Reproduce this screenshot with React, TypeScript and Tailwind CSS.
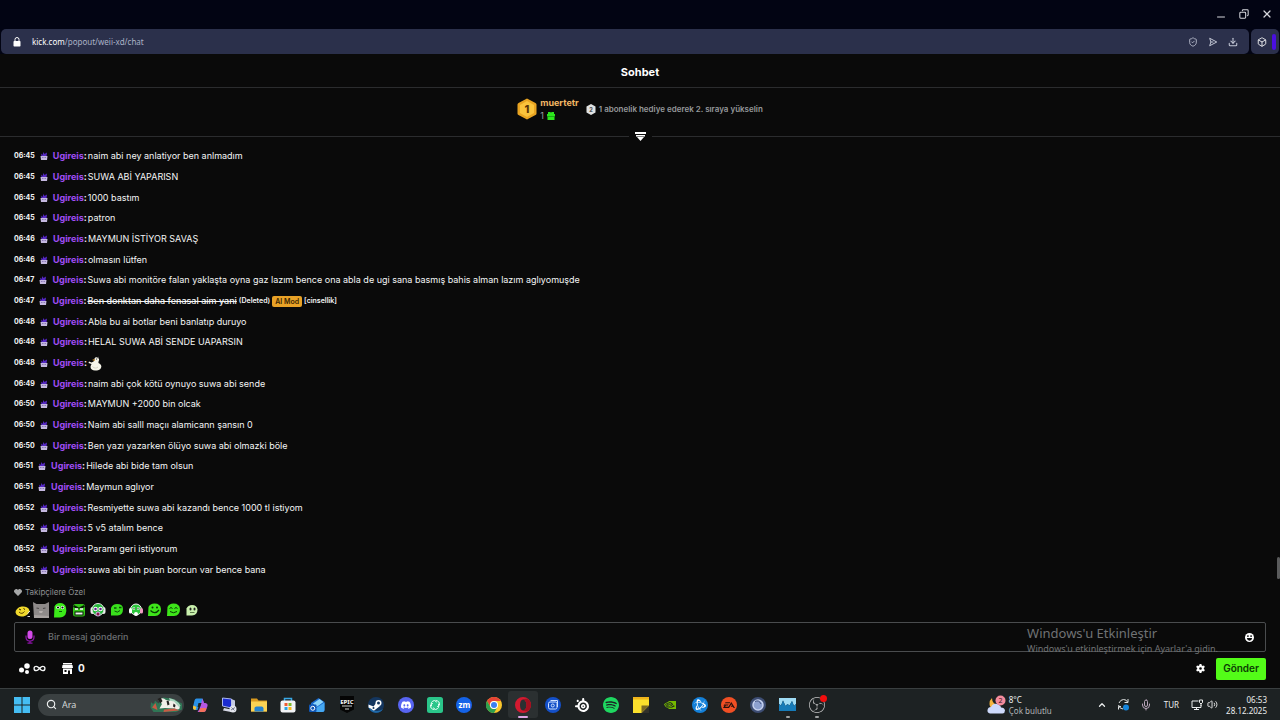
import { useState, type ReactNode } from "react";
import {
  SiBattledotnet,
  SiDiscord,
  SiEa,
  SiNvidia,
  SiObsstudio,
  SiSpotify,
  SiSteelseries,
} from "react-icons/si";
import {
  Box,
  ChevronUp,
  Copy,
  Download,
  Infinity as InfinityIcon,
  Mic,
  Minus,
  Search,
  ShieldCheck,
  Volume2,
  X,
} from "lucide-react";

type Message = {
  time: string;
  text: string;
  deleted?: boolean;
  emote?: boolean;
};

const MESSAGES: Message[] = [
  { time: "06:45", text: "naim abi ney anlatiyor ben anlmadım" },
  { time: "06:45", text: "SUWA ABİ YAPARISN" },
  { time: "06:45", text: "1000 bastım" },
  { time: "06:45", text: "patron" },
  { time: "06:46", text: "MAYMUN İSTİYOR SAVAŞ" },
  { time: "06:46", text: "olmasın lütfen" },
  { time: "06:47", text: "Suwa abi monitöre falan yaklaşta oyna gaz lazım bence ona abla de ugi sana basmış bahis alman lazım aglıyomuşde" },
  { time: "06:47", text: "Ben donktan daha fenasal aim yani", deleted: true },
  { time: "06:48", text: "Abla bu ai botlar beni banlatıp duruyo" },
  { time: "06:48", text: "HELAL SUWA ABİ SENDE UAPARSIN" },
  { time: "06:48", text: "", emote: true },
  { time: "06:49", text: "naim abi çok kötü oynuyo suwa abi sende" },
  { time: "06:50", text: "MAYMUN +2000 bin olcak" },
  { time: "06:50", text: "Naim abi salll maçıı alamicann şansın 0" },
  { time: "06:50", text: "Ben yazı yazarken ölüyo suwa abi olmazki böle" },
  { time: "06:51", text: "Hilede abi bide tam olsun" },
  { time: "06:51", text: "Maymun aglıyor" },
  { time: "06:52", text: "Resmiyette suwa abi kazandı bence 1000 tl istiyom" },
  { time: "06:52", text: "5 v5 atalım bence" },
  { time: "06:52", text: "Paramı geri istiyorum" },
  { time: "06:53", text: "suwa abi bin puan borcun var bence bana" },
];

const SubBadge = () => (
  <svg viewBox="0 0 16 16" className="mr-[5px] h-2 w-2 shrink-0">
    <path d="M2 3l3 3 2-6 2 4 5-3-1 8H3z" fill="#5527c4" />
    <path d="M1 8h14l-1 8H2z" fill="#c4b8e0" />
    <path d="M4 10h3v2H4zM9 10h3v2H9z" fill="#8b78b8" />
  </svg>
);

const Duck = () => (
  <svg viewBox="0 0 28 30" className="h-[15px] w-[14px]">
    <path d="M13 5c2-4 8-3 9 1 1 3-2 5-1 8 5 2 7 6 5 10-2 4-6 5-12 5-5 0-9-3-9-7 0-3 2-5 2-6l-6-2 1-3 5 2c3-1 7-3 6-8z" fill="#f7f6ea" />
    <path d="M13 6l-5 2 6 2z" fill="#d69a3c" />
    <path d="M17 4l4-3 1 4z" fill="#555" />
    <circle cx="17" cy="6" r="1.2" fill="#222" />
    <path d="M9 21c3 4 8 4 11 1" fill="none" stroke="#c9c7b6" strokeWidth="1.4" />
  </svg>
);

const MessageRow = ({ message }: { message: Message }) => (
  <li className="flex min-h-[14px] flex-1 items-center text-[9px] leading-3 whitespace-nowrap">
    <time className="mr-[5px] text-[7px] font-bold">{message.time}</time>
    <SubBadge />
    <button className="font-bold text-[#a04df5]">Ugireis</button>
    <span className="mr-px font-bold">:</span>
    {message.emote && <Duck />}
    {message.deleted ? (
      <span className="flex items-center gap-[2px] text-[7px] font-semibold">
        <s className="text-[9px] font-medium">{message.text}</s>
        <span>(Deleted)</span>
        <span className="rounded-[2px] bg-[#e9a227] px-[3px] leading-[11px] text-[#3b2500]">AI Mod</span>
        <span>[cinsellik]</span>
      </span>
    ) : (
      <span>{message.text}</span>
    )}
  </li>
);

const AddressBar = () => (
  <header className="bg-[#020413]">
    <div className="flex h-7 items-center justify-end gap-3 pr-[7px] text-[#d5d6dc]">
      <button aria-label="Minimize"><Minus className="mt-[5px] h-3 w-3" strokeWidth={2} /></button>
      <button aria-label="Restore"><Copy className="h-[10px] w-[10px] rotate-90" strokeWidth={2.5} /></button>
      <button aria-label="Close"><X className="h-3 w-3" strokeWidth={2.5} /></button>
    </div>
    <div className="flex h-[26px] gap-[2px] px-px pt-px">
      <div className="flex flex-1 items-center rounded-[5px] bg-[#2b304b] pr-[11px] pl-3">
        <svg viewBox="0 0 16 20" className="mr-[11px] h-[10px] w-2">
          <path d="M4 9V5a4 4 0 018 0v4" fill="none" stroke="#fff" strokeWidth="2" />
          <rect x="1" y="8" width="14" height="11" rx="1.5" fill="#fff" />
        </svg>
        <a href="#chat" className="flex-1 font-['Noto_Sans',sans-serif] text-[8px] text-[#aab0c6]">
          <span className="text-white">kick.com</span>/popout/weii-xd/chat
        </a>
        <div className="flex gap-[10px] text-[#c3c7d6]">
          <button aria-label="Protection"><ShieldCheck className="h-[10px] w-[10px]" /></button>
          <button aria-label="Share">
            <svg viewBox="0 0 24 24" className="h-[10px] w-[10px]">
              <path d="M4 3l17 9-17 9 3-9zM7 12h6" fill="none" stroke="currentColor" strokeWidth="2.4" strokeLinejoin="round" />
            </svg>
          </button>
          <button aria-label="Download"><Download className="h-[10px] w-[10px]" strokeWidth={2.5} /></button>
        </div>
      </div>
      <div className="flex w-7 items-center justify-end gap-[5px] rounded-[5px] bg-[#2b304b] pr-[3px] text-white">
        <button aria-label="Extensions"><Box className="h-[10px] w-[10px]" strokeWidth={2} /></button>
        <span className="h-4 w-1 rounded-sm bg-[#4a0fe0]" />
      </div>
    </div>
  </header>
);

const Leaderboard = () => (
  <section className="flex h-12 items-center justify-center pb-[6px]">
    <svg viewBox="0 0 40 44" className="mr-[3px] h-[22px] w-5">
      <path d="M20 1l17 9q2 1 2 3v18q0 2-2 3l-17 9-17-9q-2-1-2-3V13q0-2 2-3z" fill="#e9a421" />
      <path d="M20 6l14 8v16l-14 8-14-8V14z" fill="#fbc43c" />
      <text x="20" y="30" textAnchor="middle" fontSize="22" fontWeight="800" fill="#5b3406">1</text>
    </svg>
    <div className="mr-[7px]">
      <div className="text-[9px] leading-[13px] font-bold text-[#f3b765]">muertetr</div>
      <div className="flex items-center gap-[3px] text-[9px] leading-[13px] text-[#9a9fa3]">
        1
        <svg viewBox="0 0 16 16" className="h-2 w-2">
          <path d="M0 4h16v5H0zM1 9h14v7H1z" fill="#2ce61c" />
          <path d="M2 0h5l1 2 1-2h5v4H2z" fill="#2ce61c" />
          <path d="M0 8h16v1H0z" fill="#0b6e10" />
        </svg>
      </div>
    </div>
    <svg viewBox="0 0 20 22" className="mr-[3px] h-[11px] w-[10px]">
      <path d="M10 0l9 5v12l-9 5-9-5V5z" fill="#dfe1e2" />
      <text x="10" y="15" textAnchor="middle" fontSize="11" fontWeight="800" fill="#555">2</text>
    </svg>
    <p className="text-[8px] font-semibold text-[#96999b]">1 abonelik hediye ederek 2. sıraya yükselin</p>
  </section>
);

const Divider = () => (
  <div className="flex h-0 items-center gap-[6px]">
    <span className="h-px flex-1 bg-[#2b2c2e]" />
    <button aria-label="Daralt">
      <svg viewBox="0 0 22 18" className="h-[9px] w-[11px]">
        <path d="M0 0h22v4H0zM2 6h18v3H2zM4 10h14l-7 8z" fill="#fff" />
      </svg>
    </button>
    <span className="h-px flex-1 bg-[#2b2c2e]" />
  </div>
);

// Recently used emotes
const EMOTES: { name: string; art: ReactNode }[] = [
  {
    name: "sari",
    art: (
      <>
        <ellipse cx="17" cy="19" rx="14" ry="10" fill="#f1d92c" transform="rotate(-10 17 19)" />
        <path d="M10 20q6 6 11-1" fill="none" stroke="#5a4300" strokeWidth="2" />
        <path d="M10 14l4 2M19 13l3 2" stroke="#2a2000" strokeWidth="2" />
        <path d="M27 23l5-5M27 29h5" stroke="#ddd" strokeWidth="2" />
      </>
    ),
  },
  {
    name: "kedi",
    art: (
      <>
        <path d="M0 0l7 4h17l8-4v32H2z" fill="#8e8a89" />
        <path d="M7 12l5 1M20 13l5-1" stroke="#4a4747" strokeWidth="2.500" />
        <path d="M12 18h8l-2 4h-5z" fill="#b5afad" />
        <path d="M2 26l30 2v4H2z" fill="#a7a2a0" />
      </>
    ),
  },
  {
    name: "bakis",
    art: (
      <>
        <path d="M5 9Q8 2 16 2q10 0 12 9 2 8-1 14-4 6-12 6H4z" fill="#3bea19" />
        <circle cx="12" cy="11" r="3.5" fill="#fff" /><circle cx="21" cy="11" r="3.5" fill="#fff" />
        <circle cx="12" cy="11" r="2.2" fill="#111" /><circle cx="21" cy="11" r="2.2" fill="#111" />
        <path d="M14 19h6" stroke="#0b5c08" strokeWidth="2" />
      </>
    ),
  },
  {
    name: "kizgin",
    art: (
      <>
        <rect x="4" y="4" width="24" height="25" rx="5" fill="#35c619" />
        <path d="M5 8l10 5M27 8l-10 5" stroke="#071f05" strokeWidth="4" />
        <path d="M8 14h6M18 14h6" stroke="#fff" strokeWidth="3" />
        <rect x="8" y="20" width="16" height="6" fill="#eee" stroke="#071f05" strokeWidth="2" />
      </>
    ),
  },
  {
    name: "sok",
    art: (
      <>
        <rect x="1" y="10" width="8" height="14" rx="4" fill="#eee" />
        <rect x="23" y="10" width="8" height="14" rx="4" fill="#eee" />
        <circle cx="16" cy="15" r="12" fill="#24b83a" stroke="#e6e6e6" strokeWidth="2" />
        <circle cx="11" cy="14" r="4.500" fill="#fff" /><circle cx="21" cy="14" r="4.500" fill="#fff" />
        <circle cx="11" cy="14" r="2.500" fill="#60208a" /><circle cx="21" cy="14" r="2.500" fill="#60208a" />
        <ellipse cx="16" cy="24" rx="5" ry="5" fill="#c9b3e0" />
        <ellipse cx="16" cy="24" rx="3" ry="3" fill="#8b1646" />
      </>
    ),
  },
  {
    name: "goz",
    art: (
      <>
        <path d="M4 12Q7 4 16 4q12 0 12 10 0 12-11 13H4z" fill="#39df1c" />
        <path d="M10 12h5M20 11h5" stroke="#0b4f08" strokeWidth="3" />
        <path d="M11 18q6 5 11-1" fill="none" stroke="#0b4f08" strokeWidth="2" />
      </>
    ),
  },
  {
    name: "kulaklik",
    art: (
      <>
        <circle cx="16" cy="15" r="11" fill="#2bc63b" stroke="#f0f0f0" strokeWidth="2" />
        <rect x="2" y="12" width="6" height="11" rx="3" fill="#fff" />
        <rect x="24" y="12" width="6" height="11" rx="3" fill="#f09ac0" />
        <path d="M9 13h5M18 13h5" stroke="#fff" strokeWidth="4" />
        <path d="M11 13h2M19 13h2" stroke="#222" strokeWidth="2" />
        <ellipse cx="16" cy="24" rx="4" ry="4" fill="#fff" />
      </>
    ),
  },
  {
    name: "gulen",
    art: (
      <>
        <path d="M3 10Q6 3 15 3q12 0 13 11 0 13-12 14H2z" fill="#3ee51a" />
        <circle cx="11" cy="11" r="2" fill="#073b05" /><circle cx="20" cy="11" r="2" fill="#073b05" />
        <path d="M7 17q9 9 17-1" fill="none" stroke="#073b05" strokeWidth="2.500" />
      </>
    ),
  },
  {
    name: "mutlu",
    art: (
      <>
        <path d="M3 10Q6 3 15 3q12 0 13 11 0 13-12 14H2z" fill="#3ee51a" />
        <path d="M7 13q3-4 6 0M17 13q3-4 6 0" fill="none" stroke="#073b05" strokeWidth="2" />
        <path d="M8 19q7 5 14 0" fill="none" stroke="#073b05" strokeWidth="2" />
      </>
    ),
  },
  {
    name: "soluk",
    art: (
      <>
        <path d="M3 13Q6 6 14 6q10 0 11 9 0 11-11 12H3z" fill="#c9f0ad" />
        <ellipse cx="11" cy="14" rx="2" ry="3" fill="#222" /><ellipse cx="19" cy="14" rx="2" ry="3" fill="#222" />
        <path d="M10 21h9" stroke="#5c7a4b" strokeWidth="2" />
      </>
    ),
  },
];

const Composer = () => {
  const [draft, setDraft] = useState("");
  return (
    <footer className="px-[14px]">
      <p className="flex h-4 items-center gap-[3px] text-[8px] text-[#8d8f91]">
        <svg viewBox="0 0 16 14" className="h-[7px] w-2">
          <path d="M8 14L1 7a4 4 0 017-5 4 4 0 017 5z" fill="#a6a7a8" />
        </svg>
        Takipçilere Özel
      </p>
      <div className="flex h-[22px] items-center gap-[3px] pb-[2px]">
        {EMOTES.map((emote) => (
          <button key={emote.name} aria-label={emote.name}>
            <svg viewBox="0 0 32 32" className="h-4 w-4">{emote.art}</svg>
          </button>
        ))}
      </div>
      <div className="flex h-[30px] items-center rounded-[2px] border border-[#4a4c4e] pr-[11px] pl-[10px]">
        <svg viewBox="0 0 20 28" className="mr-[13px] h-[14px] w-[10px] shrink-0">
          <rect x="5" y="1" width="10" height="17" rx="5" fill="#d44bea" />
          <path d="M2 11v3q0 8 8 8t8-8v-3M10 22v4M5 26h10" fill="none" stroke="#8d13a8" strokeWidth="2.5" />
        </svg>
        <input
          aria-label="Bir mesaj gönderin"
          placeholder="Bir mesaj gönderin"
          value={draft}
          onChange={(e) => setDraft(e.target.value)}
          className="min-w-0 flex-1 bg-transparent text-[9px] font-medium outline-none placeholder:text-[#6d7073]"
        />
        <button aria-label="Emoji">
          <svg viewBox="0 0 20 20" className="h-[9px] w-[9px]">
            <circle cx="10" cy="10" r="10" fill="#fff" />
            <path d="M5 5h3v4H5zM12 5h3v4h-3zM4 11h12q-1 6-6 6t-6-6z" fill="#0b0c0d" />
          </svg>
        </button>
      </div>
      <div className="flex h-9 items-center pb-[3px]">
        <button aria-label="Puanlar" className="ml-[5px] flex items-center gap-[3px]">
          <svg viewBox="0 0 22 22" className="h-[11px] w-[11px]">
            <circle cx="5" cy="14" r="5" fill="#fff" />
            <circle cx="16" cy="6" r="5.500" fill="#fff" />
            <circle cx="16" cy="18" r="4" fill="#fff" />
          </svg>
          <InfinityIcon className="h-[13px] w-[13px]" strokeWidth={2.5} />
        </button>
        <button className="ml-4 flex items-center gap-[5px] text-[10px] font-bold">
          <svg viewBox="0 0 22 22" className="h-[11px] w-[11px]">
            <path d="M2 0h18v3H2zM1 4h20l1 6H0zM2 11h18v11h-4v-7h-4v7H2zM5 14v4h4v-4z" fill="#fff" fillRule="evenodd" />
          </svg>
          0
        </button>
        <button aria-label="Ayarlar" className="mr-[11px] ml-auto">
          <svg viewBox="0 0 20 20" className="h-[9px] w-[9px]">
            <path
              d="M8 0h4l.6 3 2.2 1.200 2.900-1 2 3.500L17.400 8.700v2.600l2.300 2-2 3.500-2.900-1-2.200 1.200L12 20H8l-.6-3-2.200-1.200-2.900 1-2-3.500 2.300-2V8.700L.3 6.700l2-3.500 2.900 1L7.400 3zM10 7a3 3 0 100 6 3 3 0 000-6z"
              fill="#fff"
              fillRule="evenodd"
            />
          </svg>
        </button>
        <button className="h-[22px] rounded-[2px] bg-[#53fc18] px-[7px] text-[10px] font-semibold text-[#0c3b04]">Gönder</button>
      </div>
    </footer>
  );
};

const Round = ({ color, children }: { color: string; children?: ReactNode }) => (
  <span className={`flex h-4 w-4 items-center justify-center rounded-full ${color}`}>{children}</span>
);

type TaskApp = { name: string; icon: ReactNode; active?: boolean; running?: boolean };

const APPS: TaskApp[] = [
  {
    name: "Copilot",
    icon: (
      <svg viewBox="0 0 32 32" className="h-4 w-4">
        <path d="M9 3h12l3 9h-9l-4 14H7q-6 0-5-6l3-13q1-4 4-4z" fill="#2a91e8" />
        <path d="M3 17l6 3-2 6q-6 0-5-6z" fill="#f3c33b" />
        <path d="M21 3l3 9h3q5 1 4 6l-3 8q-1 4-5 4H11l4-6 4-14z" fill="#b457e2" />
        <path d="M17 22l-3 8h9q4 0 5-4l1-4z" fill="#f4705c" />
        <path d="M13 12h6l-3 8h-5z" fill="#1b2122" />
      </svg>
    ),
  },
  {
    name: "Uzak Masaüstü",
    icon: (
      <svg viewBox="0 0 32 32" className="h-4 w-4">
        <path d="M3 2l18 2v18L3 18z" fill="#1b2cd0" stroke="#a9b7f0" strokeWidth="2" />
        <path d="M21 4l7 3v17l-7-2z" fill="#c5cbe2" />
        <path d="M6 22l14 3v5L4 27z" fill="#d5d8e5" />
        <circle cx="24" cy="24" r="7" fill="#e5e7ee" />
        <path d="M20 26l8-5M21 21l6 6" stroke="#767b90" strokeWidth="2" />
      </svg>
    ),
  },
  {
    name: "Dosya Gezgini",
    icon: (
      <svg viewBox="0 0 32 32" className="h-4 w-4">
        <path d="M0 3h12l3 4h17v22H0z" fill="#d99a20" />
        <path d="M0 9h32v20H0z" fill="#fbd354" />
        <path d="M7 29v-6q0-4 4-4h10q4 0 4 4v6z" fill="#2583d0" />
      </svg>
    ),
  },
  {
    name: "Microsoft Store",
    icon: (
      <svg viewBox="0 0 32 32" className="h-4 w-4">
        <path d="M9 9V3h14v6" fill="none" stroke="#39a9e5" strokeWidth="3" />
        <rect x="1" y="7" width="30" height="24" rx="4" fill="#f1f3f5" />
        <path d="M9 12h6v6H9z" fill="#ef5b30" /><path d="M17 12h6v6h-6z" fill="#7dba2c" />
        <path d="M9 20h6v6H9z" fill="#29a3e3" /><path d="M17 20h6v6h-6z" fill="#f8b719" />
      </svg>
    ),
  },
  {
    name: "Outlook",
    icon: (
      <svg viewBox="0 0 32 32" className="h-4 w-4">
        <path d="M4 12L19 2l12 8v16q0 4-4 4H8q-4 0-4-4z" fill="#1768cc" />
        <path d="M8 13l13-9 8 6-14 10z" fill="#8cd5fa" />
        <path d="M14 22l17-11v15q0 4-4 4H11z" fill="#45a8f2" />
        <rect y="15" width="15" height="15" rx="2" fill="#1057b6" />
        <circle cx="7.500" cy="22.500" r="4" fill="none" stroke="#fff" strokeWidth="2" />
      </svg>
    ),
  },
  {
    name: "Epic Games",
    icon: (
      <svg viewBox="0 0 32 34" className="h-[17px] w-4">
        <path d="M2 0h28v27l-14 7-14-7z" fill="#050505" />
        <text x="16" y="16" textAnchor="middle" fontSize="12" fontWeight="800" fill="#eee">EPIC</text>
        <path d="M6 20h20M12 26h8" stroke="#ccc" strokeWidth="2" />
      </svg>
    ),
  },
  {
    name: "Steam",
    icon: (
      <svg viewBox="0 0 32 32" className="h-4 w-4">
        <circle cx="16" cy="16" r="16" fill="#14365f" />
        <path d="M1 20a16 16 0 0029 4Q16 34 1 20z" fill="#1f6aa8" />
        <path d="M1 15l10 4 6-8 7 7-9 7q-4 4-8-1l-6-3z" fill="#fff" />
        <circle cx="21" cy="12" r="6" fill="#fff" />
        <circle cx="21" cy="12" r="3" fill="#14365f" />
        <circle cx="11" cy="22" r="2" fill="#14365f" />
      </svg>
    ),
  },
  { name: "Discord", icon: <Round color="bg-[#5865f2]"><SiDiscord className="h-[10px] w-[10px] text-white" /></Round> },
  {
    name: "Element",
    icon: (
      <svg viewBox="0 0 32 32" className="h-4 w-4">
        <rect width="32" height="32" rx="5" fill="#2ac68a" />
        <path d="M9 18q-3-9 6-11l4 3M23 14q3 9-6 11l-4-3M18 7q8 1 7 9l-4 3M14 25q-8-1-7-9l4-3" fill="none" stroke="#e9fff5" strokeWidth="2" strokeLinecap="round" />
      </svg>
    ),
  },
  { name: "Zoom", icon: <Round color="bg-[#1463e8]"><b className="text-[8px] leading-none text-white">zm</b></Round> },
  {
    name: "Chrome",
    icon: (
      <svg viewBox="0 0 32 32" className="h-4 w-4">
        <circle cx="16" cy="16" r="16" fill="#fbc72c" />
        <path d="M2.100 8A16 16 0 0129.900 8H16a8 8 0 00-7 12z" fill="#e54335" />
        <path d="M2.100 8A16 16 0 0016 32l7-12a8 8 0 01-14 0z" fill="#2ea04f" />
        <circle cx="16" cy="16" r="8" fill="#fff" />
        <circle cx="16" cy="16" r="6" fill="#3b7ff0" />
      </svg>
    ),
  },
  {
    name: "Opera",
    active: true,
    icon: (
      <svg viewBox="0 0 32 32" className="h-4 w-4">
        <path d="M16 0a16 16 0 100 32 16 16 0 000-32zm0 5c4 0 7 5 7 11s-3 11-7 11-6-5-6-11 2-11 6-11z" fill="#d31a30" fillRule="evenodd" />
        <path d="M16 5q9-4 13 2 6 9 0 18-5 6-13 2c4 0 7-5 7-11s-3-11-7-11z" fill="#a3101f" />
      </svg>
    ),
  },
  {
    name: "Görüntü",
    icon: (
      <svg viewBox="0 0 32 32" className="h-4 w-4">
        <circle cx="16" cy="16" r="16" fill="#1450c8" />
        <rect x="7" y="10" width="17" height="14" rx="3" fill="none" stroke="#cfe1ff" strokeWidth="2" />
        <path d="M11 7h14v13" fill="none" stroke="#cfe1ff" strokeWidth="2" />
        <circle cx="15.500" cy="17" r="3" fill="none" stroke="#cfe1ff" strokeWidth="2" />
      </svg>
    ),
  },
  { name: "SteelSeries", icon: <SiSteelseries className="h-[14px] w-[14px] text-white" /> },
  { name: "Spotify", icon: <SiSpotify className="h-4 w-4 text-[#1ed760]" /> },
  {
    name: "Yapışkan Notlar",
    icon: (
      <svg viewBox="0 0 32 32" className="h-4 w-4">
        <path d="M0 0h32v32H0z" fill="#fbe02c" />
        <path d="M0 0h32v5H0z" fill="#f0b51b" />
        <path d="M32 17v15H17z" fill="#30302a" />
        <path d="M17 32V17h15z" fill="#7c6b23" />
      </svg>
    ),
  },
  { name: "NVIDIA", icon: <SiNvidia className="h-3 w-3 text-[#76b900]" /> },
  { name: "Battle.net", icon: <Round color="bg-[#1480d8]"><SiBattledotnet className="h-3 w-3 text-white" /></Round> },
  { name: "EA", icon: <Round color="bg-[#f04f24]"><SiEa className="h-3 w-3 text-[#26110c]" /></Round> },
  {
    name: "Ubisoft",
    icon: (
      <svg viewBox="0 0 32 32" className="h-4 w-4">
        <circle cx="16" cy="16" r="16" fill="#3d4d73" />
        <circle cx="16" cy="16" r="10" fill="#8ca0cf" stroke="#c4d0ee" strokeWidth="3" />
        <path d="M10 9q8-4 12 5" fill="none" stroke="#42537e" strokeWidth="2" />
      </svg>
    ),
  },
  {
    name: "Görev Yöneticisi",
    running: true,
    icon: (
      <svg viewBox="0 0 34 26" className="h-[13px] w-[17px]">
        <path d="M0 0h34v12l-4 4-4-10-5 9-4-3-4 4-5-11-4 10-4-3z" fill="#9fdcf5" />
        <path d="M0 12l4 3 4-10 5 11 4-4 4 3 5-9 4 10 4-4v14H0z" fill="#167bb8" />
      </svg>
    ),
  },
  {
    name: "OBS Studio",
    running: true,
    icon: (
      <span className="relative">
        <SiObsstudio className="h-4 w-4 text-[#c4c4c4]" />
        <span className="absolute -top-[2px] -right-[2px] h-[7px] w-[7px] rounded-full bg-[#f20d0d]" />
      </span>
    ),
  },
];

const Taskbar = () => (
  <nav className="flex h-8 shrink-0 items-center border-t border-[#3a3f40] bg-[#1d2223] pr-[13px] pl-[14px] font-['Noto_Sans',sans-serif] text-[8px] text-[#eceeee]">
    <button aria-label="Başlat" className="mr-2">
      <svg viewBox="0 0 32 32" className="h-4 w-4">
        <path d="M0 0h15v15H0zM17 0h15v15H17zM0 17h15v15H0zM17 17h15v15H17z" fill="#45bdf3" />
      </svg>
    </button>
    <label className="mr-px flex h-[22px] w-[146px] items-center rounded-full bg-[#3a4041] pr-px pl-2">
      <Search className="mr-[5px] h-[11px] w-[11px] shrink-0" strokeWidth={2.500} />
      <input aria-label="Ara" placeholder="Ara" className="min-w-0 flex-1 bg-transparent text-[9px] outline-none placeholder:text-[#d4d7d7]" />
      <svg viewBox="0 0 66 34" className="h-[17px] w-[33px]">
        <path d="M2 12q6 8 8-3l7 6 9-12 18 2 20 10v12L52 32H7L1 23z" fill="#2f7655" />
        <path d="M38 4q18 4 23 15l-4 8-14-8z" fill="#a5d1bb" />
        <path d="M17 8q8-7 15 0l16 3 12 13q-4 5-11 1L30 24l-11 1 5-9z" fill="#f0eee8" />
        <path d="M15 6l6-3 4 7-4 5zM33 10l4-1 2 8-4 2zM47 15l4 3-1 5-4-2z" fill="#22211f" />
        <path d="M4 23l7-9 4 14zM28 27l22-2 8 4-31 3z" fill="#c65b45" />
      </svg>
    </label>
    <div className="flex w-[647px] items-stretch self-stretch">
      {APPS.map((app) => (
        <button
          key={app.name}
          aria-label={app.name}
          className={`relative my-[2px] flex flex-1 items-center justify-center rounded-[3px] ${app.active ? "bg-[#2b3031]" : ""}`}
        >
          {app.icon}
          {app.active && <span className="absolute bottom-0 h-[2px] w-[10px] rounded-full bg-[#e0a5e6]" />}
          {app.running && <span className="absolute bottom-0 h-[2px] w-1 rounded-full bg-[#a0a3a3]" />}
        </button>
      ))}
    </div>
    <button className="ml-auto flex items-center gap-[3px] text-left">
      <svg viewBox="0 0 38 40" className="h-5 w-[19px]">
        <path d="M10 6q0 13 14 14-3 8-11 7-8-2-8-9 0-8 5-12z" fill="#f4b43d" />
        <path d="M6 37q-6-2-5-7 1-6 7-6 4-8 12-6 7 2 8 7 7 0 8 6 0 5-5 6z" fill="#cdd9fb" />
        <circle cx="27" cy="11" r="10" fill="#f58c9d" />
        <text x="27" y="16" textAnchor="middle" fontSize="14" fill="#3b1018">2</text>
      </svg>
      <span className="leading-[11px]">
        <span className="block">8°C</span>
        <span className="block text-[#b2b5b6]">Çok bulutlu</span>
      </span>
    </button>
    <div className="ml-[45px] flex items-center">
      <button aria-label="Gizli simgeler"><ChevronUp className="h-[10px] w-[10px]" strokeWidth={3} /></button>
      <button aria-label="Eşitleme" className="ml-[10px]">
        <svg viewBox="0 0 26 26" className="h-[13px] w-[13px]">
          <path d="M4 10q3-7 9-7 6 0 8 5M22 2v7h-7M3 14q1 7 9 8M3 23v-6h5" fill="none" stroke="#dfe2e2" strokeWidth="2" />
          <circle cx="18" cy="19" r="6" fill="#1686dc" />
        </svg>
      </button>
      <button aria-label="Mikrofon" className="ml-[10px]"><Mic className="h-3 w-3 text-[#b9a4ba]" /></button>
      <button className="ml-3">TUR</button>
      <button aria-label="Ağ" className="ml-3">
        <svg viewBox="0 0 24 24" className="h-3 w-3">
          <path d="M15 4H2v13h18v-5M6 21h10M11 17v4" fill="none" stroke="currentColor" strokeWidth="2" />
          <path d="M17 2h6v5l-3 3-3-3zM20 10v4" fill="none" stroke="currentColor" strokeWidth="2" />
        </svg>
      </button>
      <button aria-label="Ses" className="ml-1"><Volume2 className="h-[11px] w-[11px]" /></button>
    </div>
    <button className="ml-2 text-right leading-[11px]">
      <span className="block">06:53</span>
      <span className="block">28.12.2025</span>
    </button>
  </nav>
);

const App = () => {
  return (
    <div className="relative flex min-h-screen flex-col bg-[#0a0a0a] font-['Inter',sans-serif] text-[#f4f5f5]">
      <AddressBar />
      <main id="chat" className="flex flex-1 flex-col">
        <h1 className="h-[34px] border-b border-[#2b2c2e] pt-[2px] text-center text-[11px] leading-8 font-bold text-white">Sohbet</h1>
        <Leaderboard />
        <Divider />
        <div className="flex flex-1 pt-[10px]">
          <ul className="flex flex-1 flex-col pl-[14px]">
            {MESSAGES.map((message, i) => (
              <MessageRow key={i} message={message} />
            ))}
          </ul>
          <span className="mb-px h-[22px] w-[3px] self-end rounded-full bg-[#5a5b5c]" />
        </div>
        <div className="h-1" />
        <Composer />
      </main>
      <Taskbar />
      <aside className="pointer-events-none absolute right-[62px] bottom-[65px] font-['Noto_Sans',sans-serif] text-[#707274]">
        <p className="text-[13px] leading-[17px]">Windows'u Etkinleştir</p>
        <p className="text-[9px] leading-[13px]">Windows'u etkinleştirmek için Ayarlar'a gidin.</p>
      </aside>
    </div>
  );
};

export default App;
